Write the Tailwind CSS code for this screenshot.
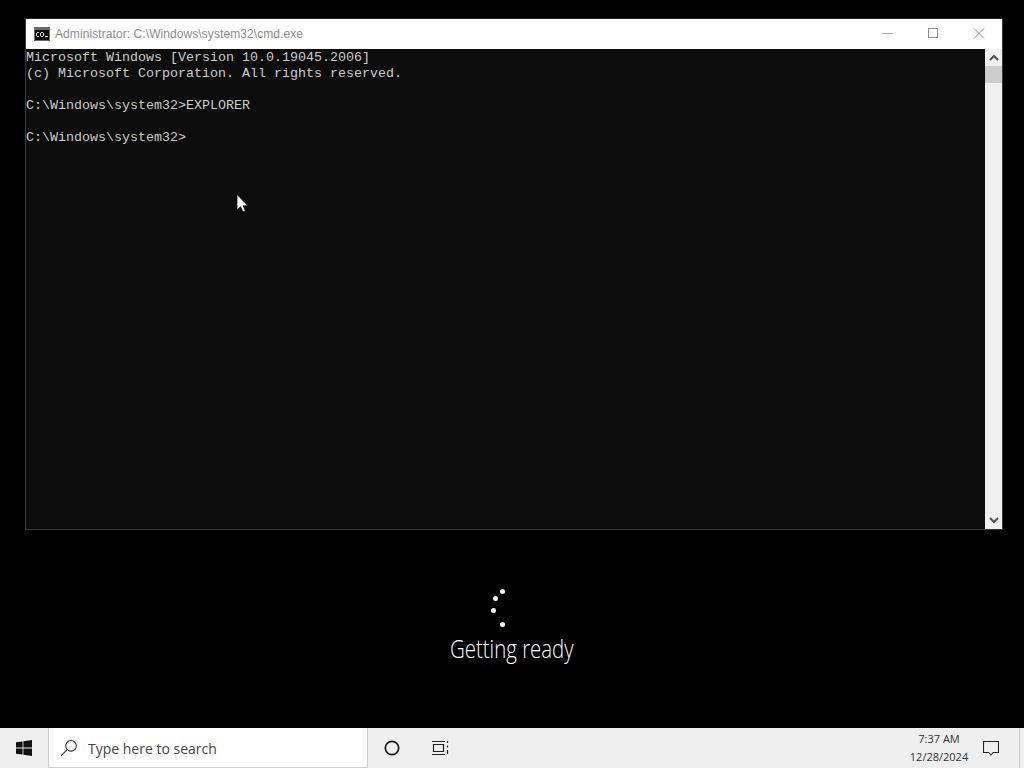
<!DOCTYPE html>
<html lang="en">

<head>
    <meta charset="UTF-8">
    <title>Administrator: C:\Windows\system32\cmd.exe</title>
    <script src="https://cdn.jsdelivr.net/npm/@tailwindcss/browser@4"></script>
</head>

<body class="bg-black overflow-hidden">
    <div class="relative w-[1024px] h-[768px] flex flex-col font-['Open_Sans','Liberation_Sans',sans-serif]">

        <!-- cmd window -->
        <div class="mt-[18px] ml-[25px] w-[978px] h-[512px] flex flex-col border border-[#3a3a3a] border-t-[#222]">
            <div class="h-[30px] bg-white flex items-center shrink-0">
                <svg class="ml-[8px]" width="16" height="14" viewBox="0 0 16 14">
                    <rect width="16" height="14" fill="#6a6a6a" />
                    <rect x="1" y="3" width="14" height="10" fill="#0c0c0c" />
                    <path d="M3 5.5h2M2.5 6v3M3 9.5h2M7 5.5h2M6.5 6v3M9.5 6v3M7 9.5h2M11 9.5h3" stroke="#ddd" stroke-width="1" fill="none" />
                </svg>
                <span class="ml-[5px] text-[12px] text-[#8c8c8c] font-['Liberation_Sans',sans-serif] tracking-[0.08px]">Administrator: C:\Windows\system32\cmd.exe</span>
                <div class="ml-auto flex items-center">
                    <svg width="46" height="30" viewBox="0 0 46 30">
                        <path d="M18 14.5h11" stroke="#a8a8a8" stroke-width="1" />
                    </svg>
                    <svg width="46" height="30" viewBox="0 0 46 30">
                        <rect x="18.5" y="9.5" width="9" height="9" fill="none" stroke="#909090" stroke-width="1" />
                    </svg>
                    <svg width="46" height="30" viewBox="0 0 46 30">
                        <path d="M18 9.5l10 10M28 9.5l-10 10" stroke="#909090" stroke-width="1" />
                    </svg>
                </div>
            </div>
            <div class="flex flex-1 min-h-0">
                <pre class="flex-1 pt-[1px] bg-[#0c0c0c] text-[#cccccc] text-[13.33px] leading-[16px] font-['Liberation_Mono',monospace]">Microsoft Windows [Version 10.0.19045.2006]
(c) Microsoft Corporation. All rights reserved.

C:\Windows\system32&gt;EXPLORER

C:\Windows\system32&gt;</pre>
                <div class="w-[17px] bg-[#f0f0f0] flex flex-col items-center">
                    <svg width="16" height="17" viewBox="0 0 16 17">
                        <path d="M4 11l4-4 4 4" stroke="#505050" stroke-width="2" fill="none" />
                    </svg>
                    <div class="w-full h-[17px] bg-[#cdcdcd]"></div>
                    <svg class="mt-auto" width="16" height="17" viewBox="0 0 16 17">
                        <path d="M4 6l4 4 4-4" stroke="#505050" stroke-width="2" fill="none" />
                    </svg>
                </div>
            </div>
        </div>

        <!-- getting ready -->
        <div class="flex-1 flex flex-col items-center">
            <div class="relative mt-[58px] w-[40px] h-[40px] ml-[-24px]">
                <span class="absolute left-[20px] top-[1px] w-[5px] h-[5px] rounded-full bg-white"></span>
                <span class="absolute left-[13px] top-[8px] w-[5px] h-[5px] rounded-full bg-white"></span>
                <span class="absolute left-[11px] top-[20px] w-[5px] h-[5px] rounded-full bg-white"></span>
                <span class="absolute left-[20px] top-[34px] w-[5px] h-[5px] rounded-full bg-white"></span>
            </div>
            <div class="mt-[3px] text-[26px] leading-[34px] font-light text-white scale-x-[0.785] whitespace-nowrap">Getting ready</div>
        </div>

        <!-- taskbar -->
        <div class="h-[40px] bg-[#efefef] flex items-center shrink-0">
            <div class="w-[48px] flex justify-center">
                <svg width="16" height="16" viewBox="0 0 16 16" fill="#111">
                    <path d="M0 2.3l6.6-.9v6.2H0zM7.4 1.3L16 0v7.6H7.4zM0 8.4h6.6v6.2L0 13.7zM7.4 8.4H16V16l-8.6-1.3z" />
                </svg>
            </div>
            <div class="w-[320px] h-[40px] bg-white border border-[#cfcfcf] border-t-0 flex items-center">
                <svg class="ml-[11px]" width="18" height="18" viewBox="0 0 18 18" fill="none" stroke="#333" stroke-width="1.1">
                    <circle cx="11" cy="6.8" r="5.3" />
                    <path d="M7.2 10.6L1 16.8" />
                </svg>
                <span class="ml-[10px] mt-[1px] text-[14px] text-[#444] font-['Open_Sans',sans-serif]">Type here to search</span>
            </div>
            <div class="w-[48px] flex justify-center">
                <svg width="16" height="16" viewBox="0 0 16 16" fill="none">
                    <circle cx="8" cy="8" r="6.7" stroke="#111" stroke-width="1.7" />
                </svg>
            </div>
            <div class="w-[48px] flex justify-center">
                <svg width="18" height="16" viewBox="0 0 18 16" fill="none" stroke="#222" stroke-width="1.2">
                    <path d="M1 1.5h13M1 14.5h13M2.5 4.5h10v7h-10zM16.5 1v2M16.5 5.5v2M16.5 10v4" />
                </svg>
            </div>
            <div class="ml-auto w-[64px] flex flex-col items-center text-[11px] leading-[18px] text-[#333] font-['Open_Sans',sans-serif]">
                <span>7:37 AM</span>
                <span>12/28/2024</span>
            </div>
            <div class="w-[40px] flex justify-center">
                <svg width="16" height="16" viewBox="0 0 16 16" fill="none" stroke="#222" stroke-width="1.1">
                    <path d="M.5 1.5h15v11h-5.2L8 15l-2.3-2.5H.5z" />
                </svg>
            </div>
            <div class="w-[13px] h-[40px] flex">
                <div class="ml-[8px] w-[1px] h-full bg-[#c8c8c8]"></div>
            </div>
        </div>

        <!-- mouse pointer -->
        <svg class="absolute left-[236px] top-[194px]" width="13" height="19" viewBox="0 0 13 19">
            <path d="M1 .5v15.5l3.6-3.3 2.2 5.3 2.6-1.1-2.2-5.1h4.8z" fill="#fff" stroke="#000" stroke-width="0.7" />
        </svg>
    </div>
</body>

</html>
